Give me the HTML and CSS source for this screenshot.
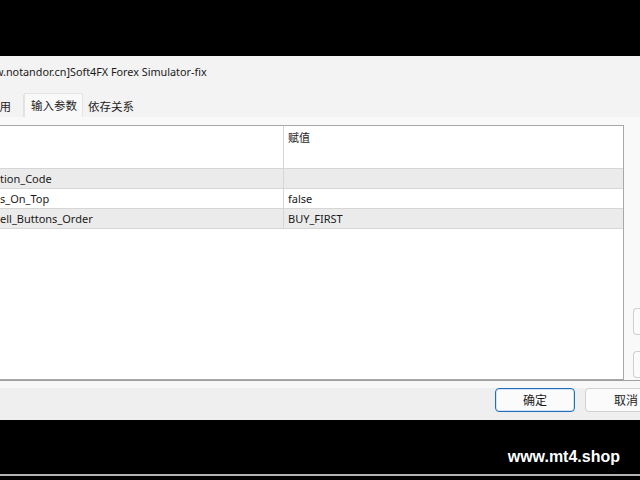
FILE: index.html
```html
<!DOCTYPE html>
<html>
<head>
<meta charset="utf-8">
<link rel="stylesheet" href="styles.css">
</head>
<body>
<div class="screen">
  <div class="topband"></div>
  <div class="dialog">
    <div class="titlebar"><span class="title">w.notandor.cn]Soft4FX Forex Simulator-fix</span></div>
    <div class="tabs">
      <div class="tab tab-first">常用</div>
      <div class="tab active">输入参数</div>
      <div class="tab tab-last">依存关系</div>
    </div>
    <div class="panel">
      <div class="content">
        <div class="grid">
          <div class="row header"><div class="c1"></div><div class="c2">赋值</div></div>
          <div class="row gray"><div class="c1">tion_Code</div><div class="c2"></div></div>
          <div class="row"><div class="c1">s_On_Top</div><div class="c2">false</div></div>
          <div class="row gray"><div class="c1">ell_Buttons_Order</div><div class="c2">BUY_FIRST</div></div>
        </div>
        <div class="side">
          <div class="sbtn"></div>
          <div class="sbtn"></div>
        </div>
      </div>
    </div>
    <div class="footer">
      <div class="btn primary">确定</div>
      <div class="btn">取消</div>
    </div>
  </div>
  <div class="bottomband">
    <div class="brand">www.mt4.shop</div>
    <div class="rule"></div>
  </div>
</div>
</body>
</html>
```
FILE: styles.css
```css
html, body { margin: 0; padding: 0; background: #000; }
body { width: 640px; height: 480px; overflow: hidden; font-family: "Noto Sans", "Noto Sans CJK SC", sans-serif; color: #1a1a1a; }
.screen { display: flex; flex-direction: column; width: 640px; height: 480px; }
.topband { height: 56px; background: #000; flex: none; }
.dialog { height: 364px; background: #f3f3f3; display: flex; flex-direction: column; overflow: hidden; flex: none; }
.titlebar { height: 30px; padding-bottom: 2px; display: flex; align-items: center; overflow: hidden; flex: none; }
.title { font-size: 10.8px; margin-left: -5px; white-space: nowrap; color: #1a1a1a; }
.tabs { height: 29px; display: flex; align-items: flex-end; flex: none; }
.tab { height: 22px; line-height: 22px; font-size: 11.5px; padding: 0 3px; box-sizing: border-box; font-family: "Noto Sans CJK SC", sans-serif; color: #222; white-space: nowrap; }
.tab-first { width: 24px; text-indent: -12px; overflow: hidden; padding: 0; border-right: 1px solid #e2e2e2; }
.active { background: #f9f9f9; height: 24px; line-height: 22px; padding: 0 5px 0 6px; border: 1px solid #e4e4e4; border-bottom: none; }
.tab-last { padding-left: 5px; }
.panel { flex: 1; background: #f9f9f9; padding-top: 8px; display: flex; flex-direction: column; }
.content { flex: 1; display: flex; }
.grid { width: 624px; background: #fff; border: 1px solid #a8a8a8; border-left: none; box-sizing: border-box; flex: none; }
.side { flex: 1; display: flex; flex-direction: column; justify-content: flex-end; padding: 0 0 2px 9px; gap: 16px; }
.sbtn { height: 25px; border: 1px solid #cfcfcf; border-right: none; border-radius: 4px 0 0 4px; background: #fbfbfb; }
.row { display: flex; height: 20px; box-sizing: border-box; border-bottom: 1px solid #d6d6d6; font-size: 11px; line-height: 20px; }
.row.header { height: 43px; }
.row.header .c2 { line-height: 22px; font-family: "Noto Sans CJK SC", sans-serif; }
.gray { background: #ebebeb; }
.c1 { width: 283px; border-right: 1px solid #d6d6d6; white-space: nowrap; overflow: hidden; }
.c2 { flex: 1; padding-left: 4px; }
.footer { height: 40px; border-top: 1px solid #a0a0a0; background: linear-gradient(#f8f8f8 0 7px, #efefef 7px); display: flex; align-items: center; padding-left: 495px; gap: 10px; flex: none; box-sizing: border-box; padding-bottom: 1px; }
.btn { width: 80px; height: 24px; box-sizing: border-box; border: 1px solid #d0d0d0; border-radius: 4px; background: #fbfbfb; font-size: 12px; line-height: 22px; text-align: center; font-family: "Noto Sans CJK SC", sans-serif; flex: none; }
.primary { border: 1px solid #1d6fb8; box-shadow: inset 0 0 0 1px #d0e2f3; }
.btn:last-child { width: 70px; text-align: left; padding-left: 28px; }
.bottomband { flex: 1; background: #000; display: flex; flex-direction: column; }
.brand { color: #fff; font-family: "Liberation Sans", Arial, sans-serif; font-weight: bold; font-size: 16px; text-align: right; padding-right: 20px; margin-top: 27px; height: 20px; line-height: 20px; }
.rule { margin-top: 7px; height: 2px; background: #b4b4b4; }
```
